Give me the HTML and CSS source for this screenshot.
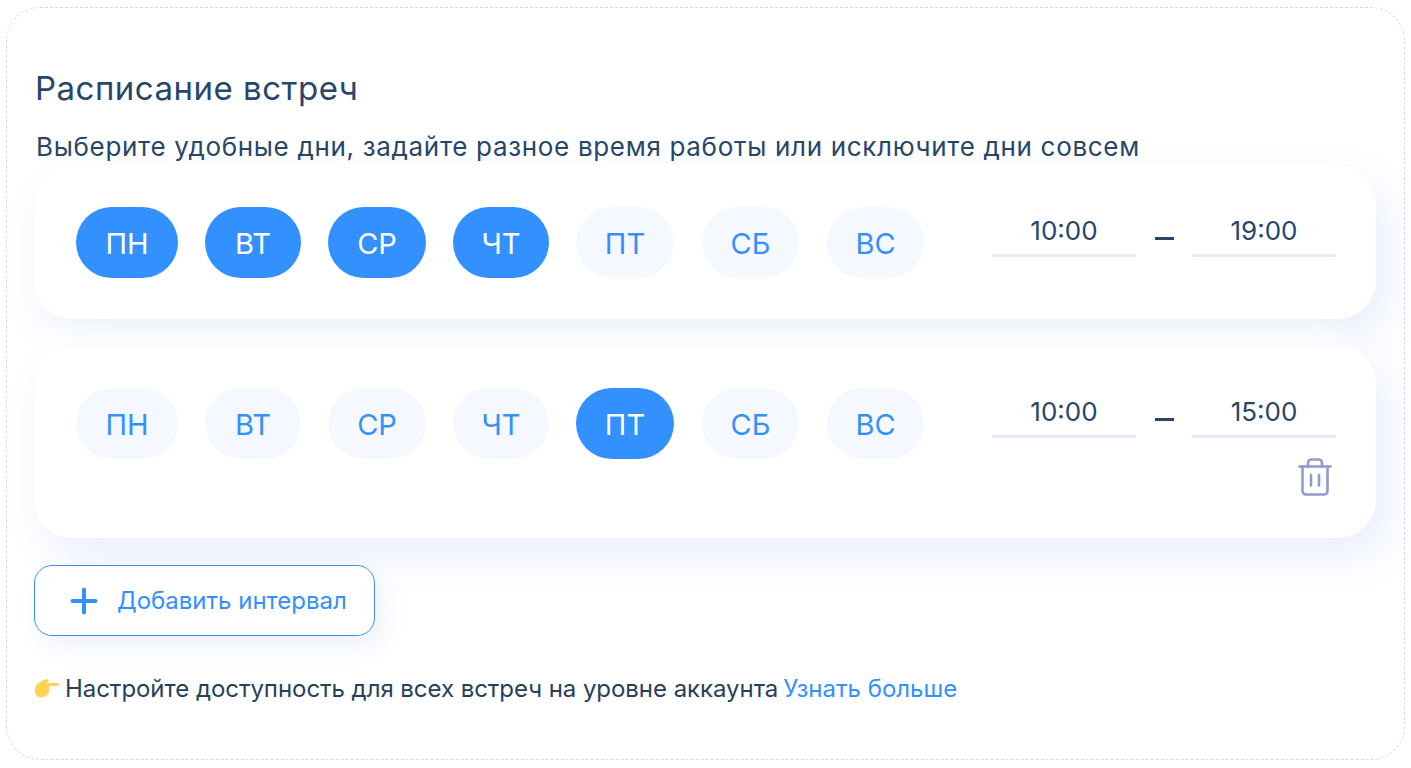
FILE: index.html
```html
<!DOCTYPE html>
<html lang="ru">
<head>
    <meta charset="UTF-8">
    <meta name="viewport" content="width=device-width, initial-scale=1.0">
    <title>Расписание встреч</title>
    <link rel="stylesheet" href="styles.css">
</head>
<body>
    <div class="panel">
        <h1 class="title">Расписание встреч</h1>
        <p class="subtitle">Выберите удобные дни, задайте разное время работы или исключите дни совсем</p>

        <div class="interval">
            <div class="days">
                <span class="day day-on day-w1">ПН</span>
                <span class="day day-on day-w2">ВТ</span>
                <span class="day day-on day-w3">СР</span>
                <span class="day day-on day-w2">ЧТ</span>
                <span class="day day-w3">ПТ</span>
                <span class="day day-w4">СБ</span>
                <span class="day day-w4">ВС</span>
            </div>
            <div class="side">
                <div class="times">
                    <span class="time">10:00</span>
                    <span class="dash"></span>
                    <span class="time">19:00</span>
                </div>
            </div>
        </div>

        <div class="interval">
            <div class="days">
                <span class="day day-w1">ПН</span>
                <span class="day day-w2">ВТ</span>
                <span class="day day-w3">СР</span>
                <span class="day day-w2">ЧТ</span>
                <span class="day day-on day-w3">ПТ</span>
                <span class="day day-w4">СБ</span>
                <span class="day day-w4">ВС</span>
            </div>
            <div class="side">
                <div class="times">
                    <span class="time">10:00</span>
                    <span class="dash"></span>
                    <span class="time">15:00</span>
                </div>
                <svg class="trash" viewBox="0 0 34 38" fill="none" stroke="#8f9bd0" stroke-width="2.6" stroke-linecap="round" stroke-linejoin="round">
                    <path d="M1.5 8.5h31"/>
                    <path d="M10 8.500V5a3.500 3.500 0 0 1 3.500-3.500h7A3.500 3.500 0 0 1 24 5v3.500"/>
                    <path d="M4.500 8.500V33a3.500 3.500 0 0 0 3.500 3.500h18a3.500 3.500 0 0 0 3.500-3.500V8.500"/>
                    <path d="M13 17v10.500M21 17v10.500"/>
                </svg>
            </div>
        </div>

        <button class="add-btn" type="button">
            <svg class="plus" viewBox="0 0 28 28" fill="none" stroke="#3390ff" stroke-width="4" stroke-linecap="round">
                <path d="M14 2.500v23M2.500 14h23"/>
            </svg>
            Добавить интервал
        </button>

        <p class="note">
            <svg class="hand" viewBox="0 0 26 22">
                <path fill="#fdd34f" d="M1 12c0-4 3-7 6-8.500C10 2 12 1 14 1.500c1 .3 1 1.500 0 2l-2 1.500h12c1.500 0 1.500 3 0 3H15c.8.800.8 2 .2 2.800.7.900.5 2.200-.4 2.900.3 1-.2 2-1.200 2.500-.3 1.300-1.500 2-3 2.300C5 21 1 18 1 12z"/>
            </svg>
            <span class="note-text">Настройте доступность для всех встреч на уровне аккаунта</span>
            <a class="more" href="#">Узнать больше</a>
        </p>
    </div>
</body>
</html>
```

FILE: styles.css
```css
*{
    box-sizing: border-box;
}
body{
    margin: 0;
    padding: 7px 6px 8px;
    background: #fff;
    font-family: Inter, "Noto Sans", sans-serif;
    color: #27466a;
}
.panel{
    height: 753px;
    border: 1px dashed #d6d9dd;
    border-radius: 34px;
    padding: 60px 28px 0 27px;
}
.title{
    margin: 0;
    font-size: 33px;
    letter-spacing: .5px;
    line-height: 40px;
    font-weight: 400;
    padding-left: 1px;
}
.subtitle{
    margin: 21px 0 0;
    font-size: 26px;
    letter-spacing: .68px;
    line-height: 36px;
    padding-left: 2px;
}
.interval{
    display: flex;
    justify-content: space-between;
    align-items: flex-start;
    margin-top: 27px;
    padding: 42px 40px 41px 42px;
    background: #fff;
    border-radius: 38px;
    box-shadow: 12px 18px 40px rgba(90, 120, 230, .13), -12px -12px 30px #fff;
}
.subtitle + .interval{
    margin-top: 0;
}
.days{
    display: flex;
    gap: 27px;
}
.day{
    height: 71px;
    padding-top: 2px;
    display: flex;
    align-items: center;
    justify-content: center;
    border-radius: 36px;
    background: #f5f8fe;
    color: #3390ff;
    font-size: 29px;
}
.day-on{
    background: #3390ff;
    color: #fff;
}
.day-w1{
    width: 102px;
}
.day-w2{
    width: 96px;
}
.day-w3{
    width: 98px;
}
.day-w4{
    width: 97px;
    margin-left: 1px;
}
.side{
    display: flex;
    flex-direction: column;
    align-items: flex-end;
}
.times{
    display: flex;
    align-items: flex-start;
}
.time{
    width: 144px;
    height: 50px;
    border-bottom: 3px solid #e5ebfa;
    text-align: center;
    font-size: 26px;
    line-height: 48px;
}
.dash{
    width: 19px;
    height: 3px;
    margin: 30px 18px 0 19px;
    background: #27466a;
}
.trash{
    width: 34px;
    height: 38px;
    margin: 20px 4px 1px 0;
    display: block;
}
.add-btn{
    display: flex;
    align-items: center;
    width: 341px;
    height: 71px;
    margin-top: 27px;
    padding: 0 0 0 35px;
    border: 1px solid #3d8fe8;
    border-radius: 18px;
    background: #fff;
    box-shadow: 8px 10px 24px rgba(90, 120, 230, .1);
    color: #3390ff;
    font-family: inherit;
    font-size: 24px;
}
.plus{
    width: 28px;
    height: 28px;
    margin-right: 19px;
}
.note{
    display: flex;
    align-items: center;
    margin: 35px 0 0;
    font-size: 24px;
    line-height: 36px;
    color: #283f5a;
}
.note-text{
    letter-spacing: -.05px;
}
.hand{
    width: 26px;
    height: 22px;
    margin-right: 5px;
}
.more{
    margin-left: 5px;
    color: #3390ff;
    text-decoration: none;
}
```
